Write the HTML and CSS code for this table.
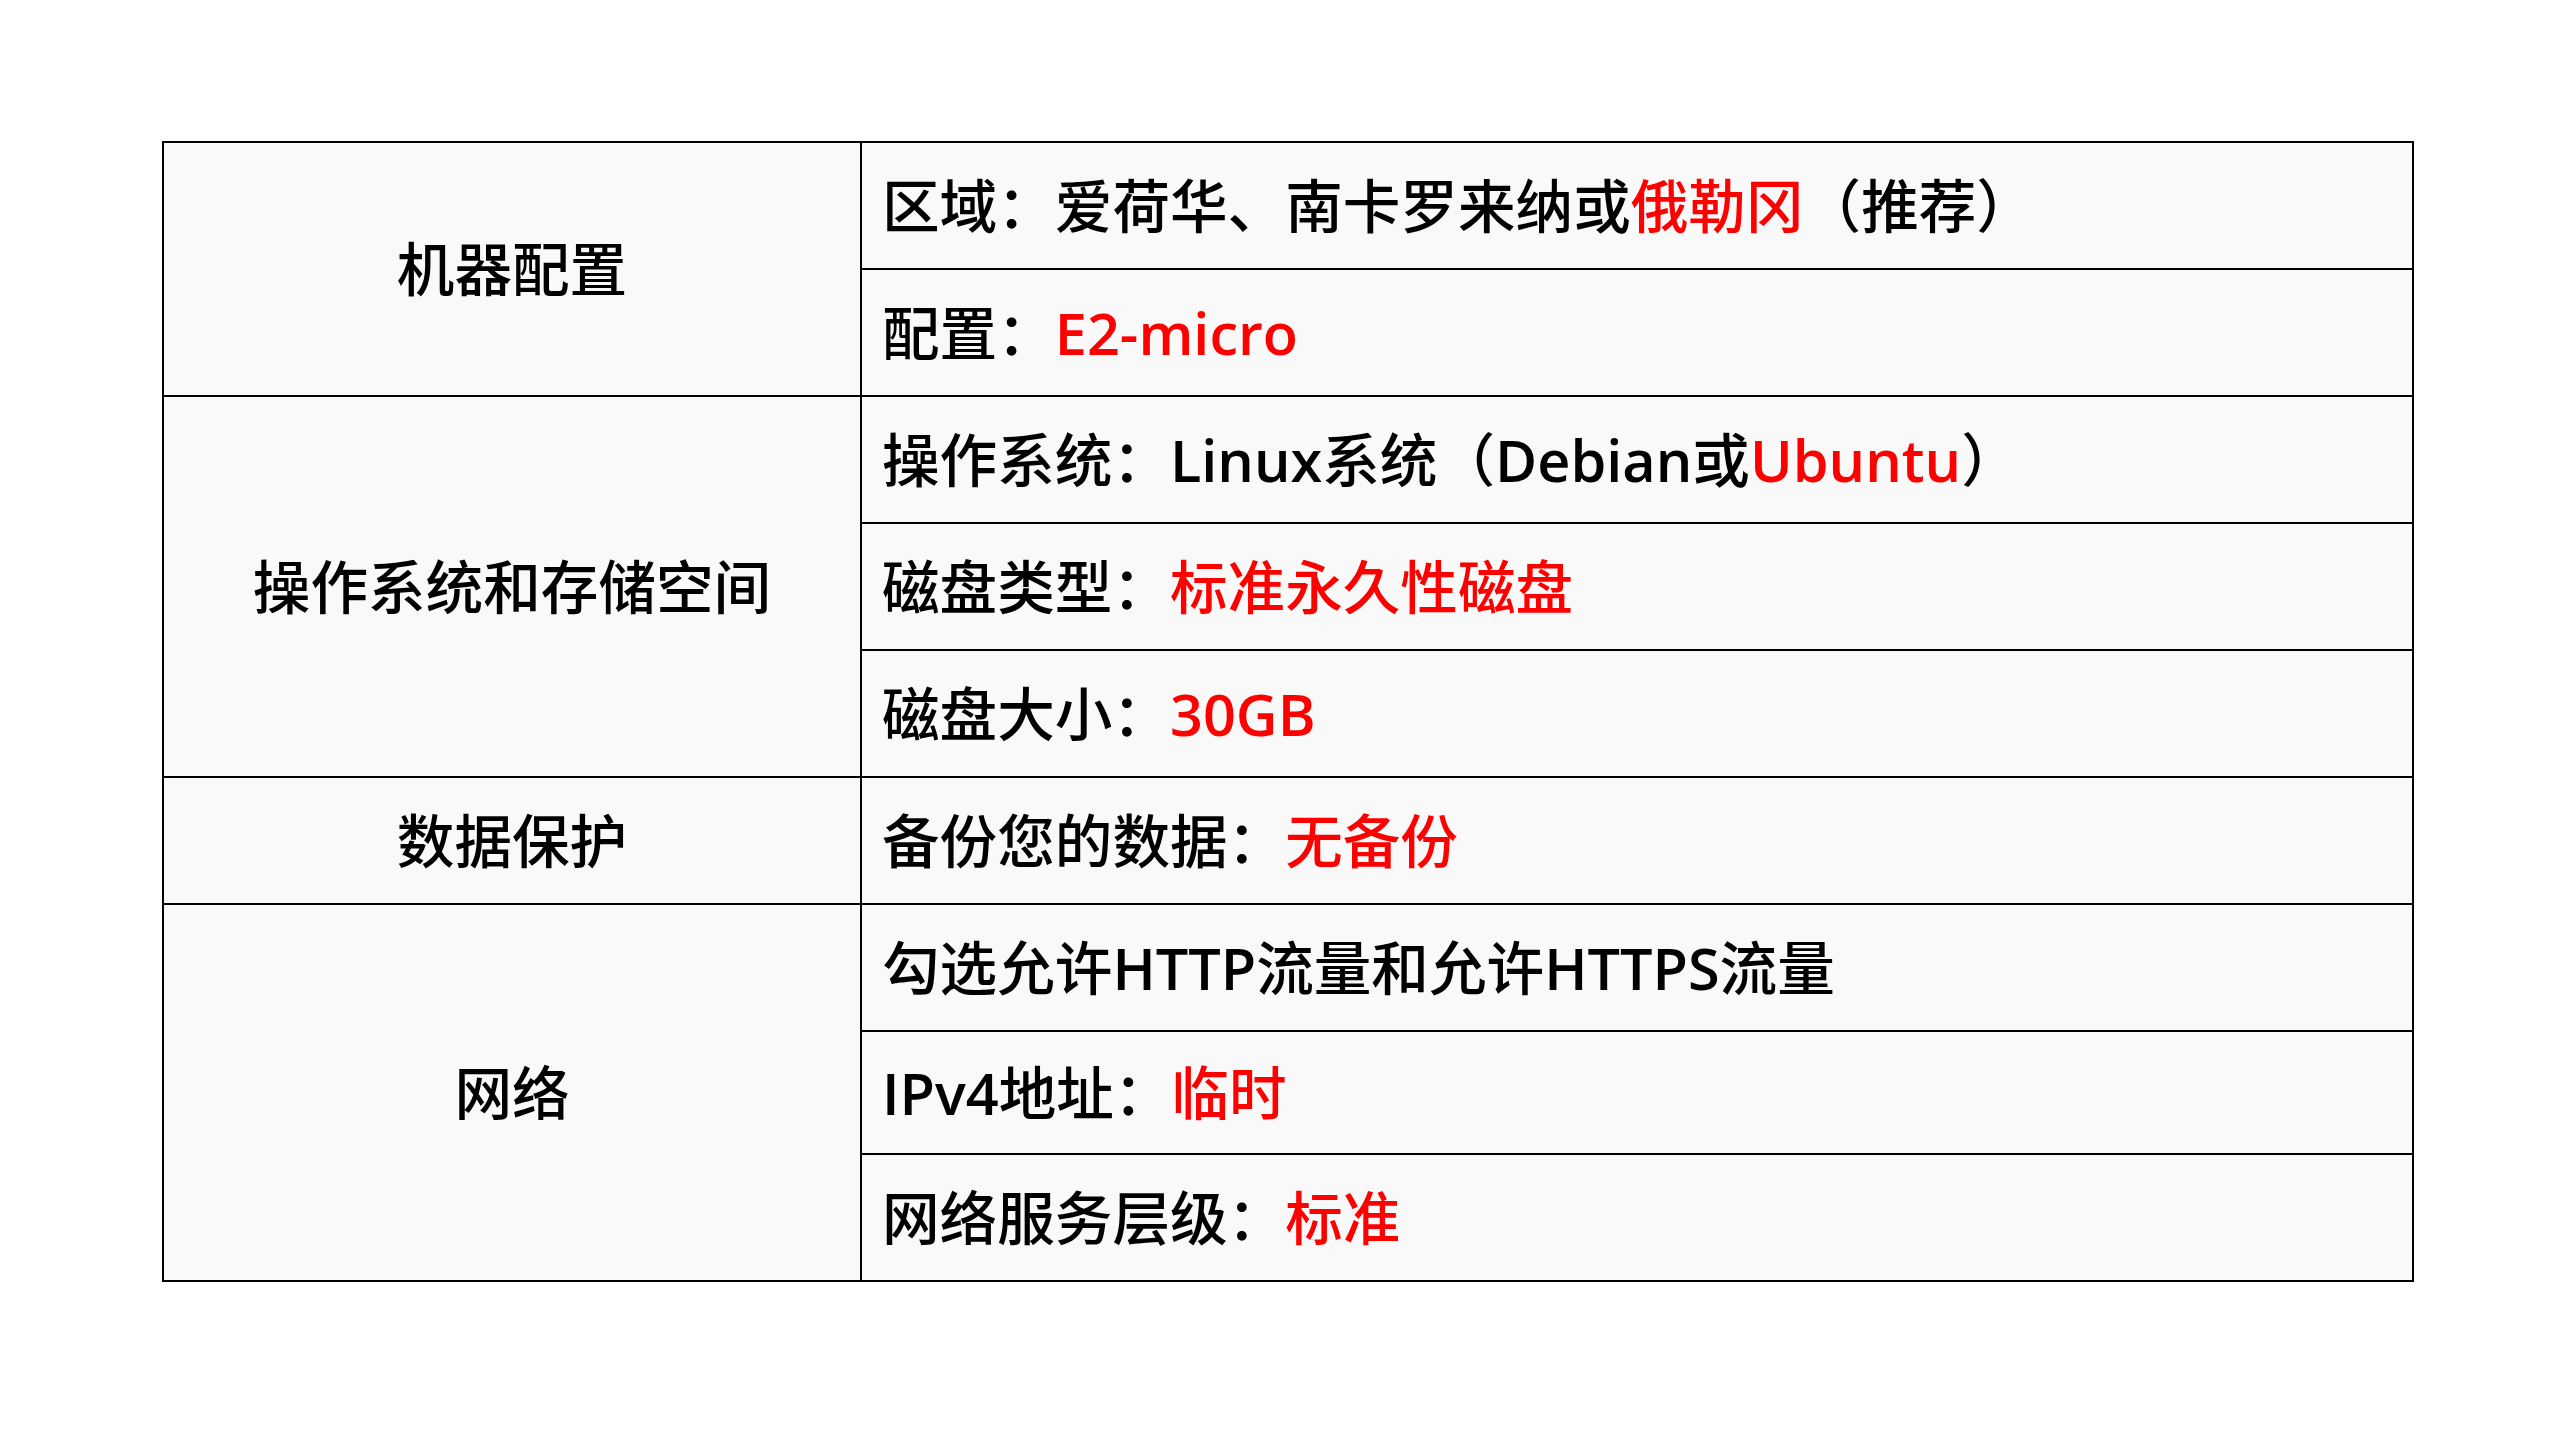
FILE: index.html
```html
<!DOCTYPE html>
<html lang="zh-CN">
<head>
<meta charset="utf-8">
<title>配置表</title>
<link rel="stylesheet" href="styles.css">
</head>
<body>
<main class="page">
  <table class="spec">
    <colgroup>
      <col class="col-label">
      <col class="col-value">
    </colgroup>
    <tbody>
      <tr>
        <th rowspan="2">机器配置</th>
        <td>区域：爱荷华、南卡罗来纳或<span class="hl">俄勒冈</span>（推荐）</td>
      </tr>
      <tr>
        <td>配置：<span class="hl lat">E2-micro</span></td>
      </tr>
      <tr>
        <th rowspan="3">操作系统和存储空间</th>
        <td>操作系统：<span class="lat">Linux</span>系统（<span class="lat">Debian</span>或<span class="hl lat">Ubuntu</span>）</td>
      </tr>
      <tr>
        <td>磁盘类型：<span class="hl">标准永久性磁盘</span></td>
      </tr>
      <tr>
        <td>磁盘大小：<span class="hl lat">30GB</span></td>
      </tr>
      <tr>
        <th>数据保护</th>
        <td>备份您的数据：<span class="hl">无备份</span></td>
      </tr>
      <tr>
        <th rowspan="3">网络</th>
        <td>勾选允许<span class="lat">HTTP</span>流量和允许<span class="lat">HTTPS</span>流量</td>
      </tr>
      <tr class="short">
        <td><span class="lat">IPv4</span>地址：<span class="hl">临时</span></td>
      </tr>
      <tr>
        <td>网络服务层级：<span class="hl">标准</span></td>
      </tr>
    </tbody>
  </table>
</main>
</body>
</html>
```
FILE: styles.css
```css
html, body {
  margin: 0;
  padding: 0;
  background: #ffffff;
}

.page {
  padding: 141px 0 0 162px;
}

.spec {
  border-collapse: collapse;
  width: 2252px;
  table-layout: fixed;
  background: #f9f9f9;
  font-family: "Open Sans", "Noto Sans CJK SC", sans-serif;
  font-size: 57.6px;
  font-weight: 500;
  color: #000;
}

.col-label { width: 698px; }

.spec th,
.spec td {
  border: 2px solid #000;
  height: 125px;
  padding: 0;
  line-height: 1;
  vertical-align: middle;
}

.spec th {
  text-align: center;
  font-weight: 500;
}

.spec td {
  text-align: left;
  padding-left: 20px;
}

.spec tr.short td {
  height: 121px;
}

.lat {
  font-weight: 600;
}

.hl {
  color: #ff0000;
}
```
